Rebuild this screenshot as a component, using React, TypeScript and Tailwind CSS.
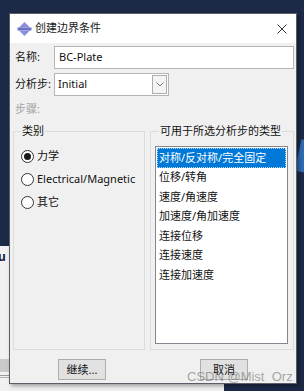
import React from 'react';

const cn = '"Noto Sans", "Noto Sans CJK SC", sans-serif';

const stepTypes = [
  '对称/反对称/完全固定',
  '位移/转角',
  '速度/角速度',
  '加速度/角加速度',
  '连接位移',
  '连接速度',
  '连接加速度',
];

const categories = ['力学', 'Electrical/Magnetic', '其它'];

function TitleIcon() {
  return (
    <svg width="15" height="16" viewBox="0 0 15 16">
      <polygon points="7.5,1 2,6.5 13,6.5" fill="#8a8fdc" />
      <rect x="0.5" y="6.5" width="14" height="3" fill="#6d72c8" />
      <polygon points="2,9.5 13,9.5 7.5,15" fill="#8a8fdc" />
    </svg>
  );
}

function Radio({ checked }: { checked?: boolean }) {
  return (
    <span className="w-[13px] h-[13px] rounded-full border border-[#333] bg-white flex items-center justify-center shrink-0">
      {checked && <span className="w-[7px] h-[7px] rounded-full bg-[#1a1a1a]" />}
    </span>
  );
}

export default function App() {
  return (
    <div className="relative w-[304px] h-[391px] overflow-hidden bg-[#1d2a47]" style={{ fontFamily: cn }}>
      {/* window behind the dialog */}
      <div className="absolute left-0 top-[246px] w-[224px] h-[145px] bg-[#f1f1f1]">
        <span className="absolute left-[-2px] top-[2px] text-[12px] font-bold text-[#1b1b3a]">u</span>
        <div className="absolute left-0 top-[113px] w-[20px] h-[13px] bg-[#c9c9c9]" />
        <div className="absolute left-0 top-[129px] w-[20px] h-px bg-[#9a9a9a]" />
        <div className="absolute left-0 top-[131px] w-[20px] h-px bg-[#b0b0b0]" />
      </div>
      {/* desktop icon peeking out on the right */}
      <div className="absolute left-[298px] top-[140px] w-[10px] h-[32px] bg-[#2e6bb5] rotate-12" />

      {/* dialog */}
      <div className="absolute left-[9px] top-[13px] w-[288px] h-[371px] bg-[#f0f0f0] border border-[#5a5e66] flex flex-col shadow-[2px_2px_4px_rgba(0,0,0,0.35)]">
        <div className="h-[29px] bg-white flex items-center pl-[7px] pr-[9px] shrink-0">
          <TitleIcon />
          <span className="ml-[3px] text-[11px] text-[#1a1a1a]">创建边界条件</span>
          <svg className="ml-auto" width="10" height="10" viewBox="0 0 10 10">
            <path d="M0.5 0.5 L9.5 9.5 M9.5 0.5 L0.5 9.5" stroke="#333" strokeWidth="1" />
          </svg>
        </div>

        <div className="flex-1 flex flex-col pl-[3px] pr-[2px] text-[11px] text-[#111]">
          <div className="mt-[3px] flex items-center h-[23px]">
            <span className="w-[41px] pl-[2px]">名称:</span>
            <div className="w-[240px] h-[23px] border border-[#b5b5b5] bg-white flex items-center pl-[4px]">BC-Plate</div>
          </div>

          <div className="mt-[4px] flex items-center h-[23px]">
            <span className="w-[41px] pl-[2px]">分析步:</span>
            <div className="w-[115px] h-[23px] border border-[#b5b5b5] bg-white flex items-center pl-[3px]">
              <span>Initial</span>
              <span className="ml-auto mr-px w-[15px] h-[19px] border border-[#adadad] bg-[#f4f4f4] flex items-center justify-center">
                <svg width="8" height="5" viewBox="0 0 8 5">
                  <path d="M0.5 0.5 L4 4 L7.5 0.5" fill="none" stroke="#777" strokeWidth="1" />
                </svg>
              </span>
            </div>
          </div>

          <div className="mt-[5px] h-[16px] flex items-center pl-[2px] text-[#a3a3a3]">步骤:</div>

          <div className="mt-[6px] grid grid-cols-[132px_144px] gap-[5px]">
            <fieldset className="h-[227px] border border-[#dcdcdc] pl-[7px]">
              <legend className="ml-0 px-px leading-[16px]">类别</legend>
              <div className="flex flex-col pt-[6px]">
                {categories.map((c, i) => (
                  <div key={c} className="h-[23px] flex items-center gap-[3px]">
                    <Radio checked={i === 0} />
                    <span>{c}</span>
                  </div>
                ))}
              </div>
            </fieldset>

            <fieldset className="h-[227px] border border-[#dcdcdc] pl-[4px] pr-[5px] pb-[4px] flex flex-col">
              <legend className="ml-[4px] px-px leading-[16px]">可用于所选分析步的类型</legend>
              <div className="mt-[7px] h-[198px] border border-[#828790] bg-white p-px">
                {stepTypes.map((t, i) => (
                  <div
                    key={t}
                    className={
                      i === 0
                        ? 'h-[19.5px] flex items-center px-[2px] bg-[#0078d7] text-white outline-1 outline-dotted outline-[#b8d7f5] -outline-offset-1'
                        : 'h-[19.5px] flex items-center px-[2px]'
                    }
                  >
                    {t}
                  </div>
                ))}
              </div>
            </fieldset>
          </div>

          <div className="mt-[9px] grid grid-cols-[132px_144px] gap-[5px]">
            <div className="flex justify-center pl-[6px]">
              <button className="w-[48px] h-[21px] border border-[#adadad] bg-[#e1e1e1] text-[11px] leading-none">继续...</button>
            </div>
            <div className="flex justify-center pl-[4px]">
              <button className="w-[48px] h-[21px] border border-[#adadad] bg-[#e1e1e1] text-[11px] leading-none">取消</button>
            </div>
          </div>
        </div>
      </div>

      {/* watermark */}
      <span
        className="absolute left-[187px] top-[367px] text-[13px] text-[rgba(110,110,110,0.6)] pointer-events-none"
        style={{ fontFamily: '"Liberation Sans", Arial, sans-serif' }}
      >
        CSDN @Mist_Orz
      </span>
    </div>
  );
}
